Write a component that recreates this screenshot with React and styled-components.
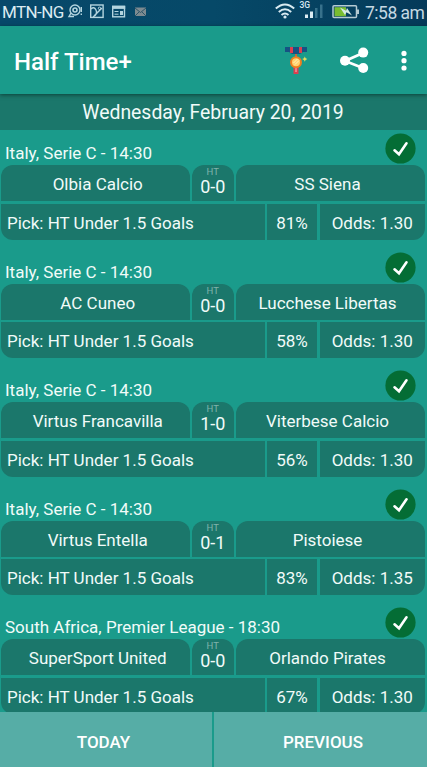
import React from "react";
import styled, { createGlobalStyle } from "styled-components";

const GlobalStyle = createGlobalStyle`
  * {
    box-sizing: border-box;
  }

  body {
    margin: 0;
    overflow: hidden;
    background: #1a9b8b;
    font-family: Roboto, sans-serif;
    color: #f1fbf9;
  }
`;

const Screen = styled.div`
  display: flex;
  flex-direction: column;
  height: 767px;
  width: 427px;
  overflow: hidden;
`;

const StatusBar = styled.div`
  display: flex;
  align-items: center;
  flex: 0 0 26px;
  padding: 0 3px 2px 2px;
  background: linear-gradient(90deg, #07486a 0%, #064968 50%, #053a59 100%);
  color: #dcebf1;
  font-size: 17px;
  white-space: nowrap;

  svg {
    display: block;
    flex: none;
  }
`;

const Carrier = styled.span`
  width: 65px;
  letter-spacing: -0.6px;
`;

const StatusIcons = styled.div`
  display: flex;
  align-items: center;
  margin-left: ${(props) => (props.$end ? "auto" : 0)};
`;

const Clock = styled.span`
  width: 59px;
  margin-left: 5px;
  padding-top: 2px;
  color: #c5d9e3;
  font-size: 17.5px;
  letter-spacing: -0.5px;
  line-height: 22px;
`;

const AppBar = styled.header`
  display: flex;
  align-items: center;
  flex: 0 0 68px;
  padding: 3px 20px 0 14px;
  z-index: 1;
  box-shadow: 0 1px 4px rgba(0, 30, 25, 0.6);
  background: #1a9b8b;
`;

const Title = styled.h1`
  flex: 1;
  margin: 0;
  color: #fff;
  font-size: 24px;
  font-weight: 500;
`;

const Actions = styled.div`
  display: flex;
  align-items: center;
  gap: 31px;
  padding-bottom: 1px;

  svg {
    display: block;
  }
`;

const DateBar = styled.div`
  flex: 0 0 36px;
  padding: 2px 1px 0 0;
  background: #1b776b;
  font-size: 19.4px;
  line-height: 34px;
  text-align: center;
`;

const Matches = styled.main`
  flex: 1;
  min-height: 0;
  overflow: hidden;
`;

const Match = styled.section`
  height: 118.5px;
  padding: 0 2px 0 1px;
`;

const MatchHeader = styled.div`
  display: flex;
  justify-content: space-between;
  height: 35px;
  padding: 3px 9px 0 4px;
`;

const League = styled.div`
  padding-top: 9px;
  font-size: 17px;
  line-height: 22px;
`;

const Row = styled.div`
  display: grid;
  grid-template-columns: ${(props) => props.$columns};
  grid-template-rows: 36px;
  gap: 2.5px;
  height: 36px;
  margin-bottom: 2.5px;
`;

const Cell = styled.div`
  padding: ${(props) => props.$pad || 0};
  background: #1b776b;
  border-radius: ${(props) => props.$radius || 0};
  font-size: 17px;
  line-height: 38px;
  text-align: ${(props) => props.$align || "center"};
  white-space: nowrap;
`;

const Score = styled(Cell)`
  display: flex;
  flex-direction: column;
  align-items: center;
  padding-top: 1px;
  font-size: 18px;
  line-height: 18px;

  small {
    height: 12px;
    color: #7fb3ab;
    font-size: 9.5px;
    line-height: 11px;
  }

  span {
    height: 18px;
  }
`;

const Footer = styled.footer`
  display: grid;
  grid-template-columns: 212px 1fr;
  gap: 2px;
  flex: 0 0 55px;
`;

const FooterButton = styled.button`
  padding: 4px 0 0;
  padding-right: ${(props) => props.$inset || 0};
  padding-left: ${(props) => (props.$inset ? 0 : "5px")};
  border: 0;
  background: #56ada6;
  color: #fff;
  font-family: inherit;
  font-size: 17px;
  font-weight: 500;
`;

const matches = [
  ["Italy, Serie C - 14:30", "Olbia Calcio", "0-0", "SS Siena", "81%", "1.30"],
  ["Italy, Serie C - 14:30", "AC Cuneo", "0-0", "Lucchese Libertas", "58%", "1.30"],
  ["Italy, Serie C - 14:30", "Virtus Francavilla", "1-0", "Viterbese Calcio", "56%", "1.30"],
  ["Italy, Serie C - 14:30", "Virtus Entella", "0-1", "Pistoiese", "83%", "1.35"],
  ["South Africa, Premier League - 18:30", "SuperSport United", "0-0", "Orlando Pirates", "67%", "1.30"],
];

const NotificationIcons = () => (
  <svg width="82" height="24" viewBox="67 0 82 24" fill="none" stroke="#b4d5df" strokeWidth="1.4">
    <circle cx="75" cy="10" r="5" />
    <circle cx="75" cy="10" r="2" strokeWidth="1.6" />
    <path d="M71 13l-2 3.5h5M81.3 7v5M81.3 13.5v1.5" />
    <rect x="90.7" y="5" width="12.4" height="12.4" />
    <path d="M91 9q3-3 5 1t-3 7M94 16l8-8" />
    <circle cx="99.5" cy="8.3" r="1.2" strokeWidth="1" />
    <rect x="112.7" y="6.5" width="11.8" height="10.3" />
    <path d="M112 7.3h13.2" strokeWidth="3.2" />
    <path d="M114.5 11.5h4M114.5 14.2h4" strokeWidth="1" />
    <path d="M120 11h3v4h-3z" fill="#b4d5df" stroke="none" />
    <path d="M135 7.5h11v8.5h-11z" fill="#7d8b91" stroke="none" />
    <path d="M135 8l5.5 4.5L146 8M135 16l4-4M146 16l-4-4" stroke="#2d5568" strokeWidth="1" />
  </svg>
);

const SystemIcons = () => (
  <svg width="85" height="24" viewBox="275 0 85 24">
    <g fill="none" stroke="#d9eaf1" strokeWidth="2">
      <path d="M275.8 8.6q9.2-8.2 18.4 0" />
      <path d="M278.8 12q6.2-5.4 12.4 0" />
      <path d="M281.5 15q3.5-3 7 0" />
    </g>
    <circle cx="285" cy="17" r="1.6" fill="#d9eaf1" />
    <text x="299.5" y="8" fill="#d9eaf1" fontSize="8.5" fontWeight="500">3G</text>
    <path d="M305 14.5h3v3.5h-3zM310 11.5h3v6.5h-3z" fill="#dcecf2" />
    <path d="M315 8h2.5v10H315zM320 4.5h2.5V18H320z" fill="#37718b" />
    <rect x="333" y="5.7" width="23.5" height="11.8" rx="1" fill="none" stroke="#b5cbd3" strokeWidth="1.5" />
    <path d="M357 9.5h2v4.5h-2z" fill="#b5cbd3" />
    <path d="M334.5 7.2h11.5v9h-11.5z" fill="#79bd31" />
    <path d="M340 7.5l6 3.2 1-2.7 5 7.5-5.5-3.2-1.5 2.7z" fill="#d4e8e1" />
  </svg>
);

const MedalIcon = () => (
  <svg width="24" height="30" viewBox="0 0 24 30">
    <path d="M0 1h22v5l-4 0-3 2H7L4 6H0z" fill="#165283" />
    <path d="M5 1h3v6H5zM14 1h3v6h-3z" fill="#dc3f50" />
    <path d="M10 8h2v3h-2z" fill="#c4693b" />
    <path d="M8.5 20h5v8h-5z" fill="#dc3f50" />
    <path d="M10.5 22h1v4h-1z" fill="#f1c2bc" />
    <circle cx="11" cy="16.2" r="5" fill="#ffd36d" stroke="#ef7f20" strokeWidth="2" />
    <path d="M8.5 17l4-4M10 18.5l4-4" stroke="#fff0c0" strokeWidth="1" />
    <path d="M19.8 10.5l.8 1.8 1.8.8-1.8.8-.8 1.8-.8-1.8-1.8-.8 1.8-.8z" fill="#e5dc5c" />
  </svg>
);

const ShareIcon = () => (
  <svg width="30" height="28" viewBox="0 0 30 28">
    <path d="M23 6L5 14l18 7" fill="none" stroke="#fff" strokeWidth="2.7" />
    <circle cx="5" cy="13.8" r="5" fill="#fff" />
    <circle cx="23.2" cy="5.6" r="5" fill="#fff" />
    <circle cx="23.2" cy="21" r="5" fill="#fff" />
  </svg>
);

const MoreIcon = () => (
  <svg width="6" height="22" viewBox="0 0 6 22" fill="#fff">
    <circle cx="3" cy="3.4" r="2.6" />
    <circle cx="3" cy="10.7" r="2.6" />
    <circle cx="3" cy="18" r="2.6" />
  </svg>
);

const CheckIcon = () => (
  <svg width="31" height="31" viewBox="0 0 31 31">
    <circle cx="15.5" cy="15.5" r="15.1" fill="#046d35" />
    <path d="M9.5 17.3l4.5 4L21.5 10.3" fill="none" stroke="#fff" strokeWidth="2.6" strokeLinecap="round" />
  </svg>
);

const App = () => {
  return (
    <Screen>
      <GlobalStyle />
      <StatusBar>
        <Carrier>MTN-NG</Carrier>
        <StatusIcons>
          <NotificationIcons />
        </StatusIcons>
        <StatusIcons $end>
          <SystemIcons />
          <Clock>7:58 am</Clock>
        </StatusIcons>
      </StatusBar>
      <AppBar>
        <Title>Half Time+</Title>
        <Actions>
          <MedalIcon />
          <ShareIcon />
          <MoreIcon />
        </Actions>
      </AppBar>
      <DateBar>Wednesday, February 20, 2019</DateBar>
      <Matches>
        {matches.map(([league, home, score, away, chance, odds]) => (
          <Match key={home}>
            <MatchHeader>
              <League>{league}</League>
              <CheckIcon />
            </MatchHeader>
            <Row $columns="188.5px 41.5px 1fr">
              <Cell $radius="12px 12px 0 0" $pad="0 0 0 5px">{home}</Cell>
              <Score $radius="12px 12px 0 0">
                <small>HT</small>
                <span>{score}</span>
              </Score>
              <Cell $radius="12px 12px 0 0" $pad="0 6px 0 0">{away}</Cell>
            </Row>
            <Row $columns="263.5px 50px 1fr">
              <Cell $align="left" $radius="0 0 0 12px" $pad="0 0 0 6px">Pick: HT Under 1.5 Goals</Cell>
              <Cell>{chance}</Cell>
              <Cell $radius="0 0 12px 0">Odds: {odds}</Cell>
            </Row>
          </Match>
        ))}
      </Matches>
      <Footer>
        <FooterButton $inset="5px">TODAY</FooterButton>
        <FooterButton>PREVIOUS</FooterButton>
      </Footer>
    </Screen>
  );
};

export default App;
